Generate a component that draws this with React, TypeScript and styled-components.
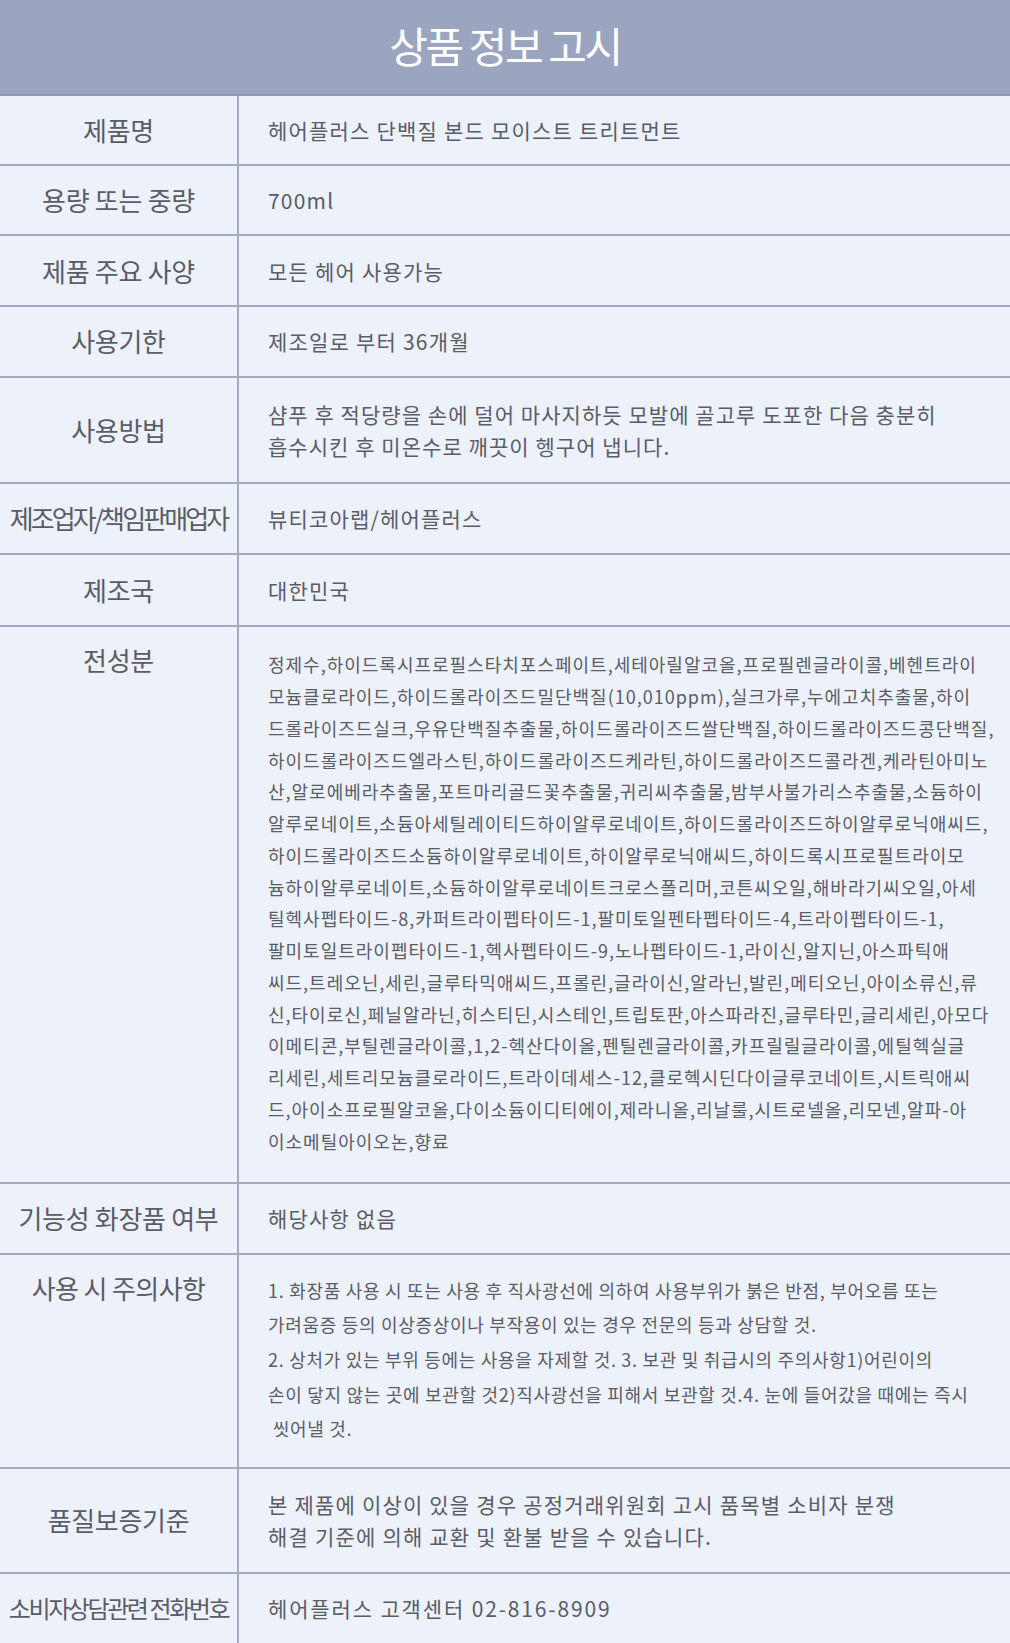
import styled, { createGlobalStyle } from "styled-components";

const GlobalStyle = createGlobalStyle`
  html, body {
    margin: 0;
    padding: 0;
    background: #edf1f9;
  }
  body {
    font-family: "Noto Sans CJK KR", "Noto Sans", sans-serif;
    color: #5a5c66;
    overflow-x: hidden;
  }
`;

type Info = {
  label: string;
  lines: string[];
  h: number;
  small?: boolean;
  top?: boolean;
  labelLs?: number;
  labelSize?: number;
  pad?: string;
  lh?: number;
  ls?: number;
};

const ingredients = [
  "정제수,하이드록시프로필스타치포스페이트,세테아릴알코올,프로필렌글라이콜,베헨트라이",
  "모늄클로라이드,하이드롤라이즈드밀단백질(10,010ppm),실크가루,누에고치추출물,하이",
  "드롤라이즈드실크,우유단백질추출물,하이드롤라이즈드쌀단백질,하이드롤라이즈드콩단백질,",
  "하이드롤라이즈드엘라스틴,하이드롤라이즈드케라틴,하이드롤라이즈드콜라겐,케라틴아미노",
  "산,알로에베라추출물,포트마리골드꽃추출물,귀리씨추출물,밤부사불가리스추출물,소듐하이",
  "알루로네이트,소듐아세틸레이티드하이알루로네이트,하이드롤라이즈드하이알루로닉애씨드,",
  "하이드롤라이즈드소듐하이알루로네이트,하이알루로닉애씨드,하이드록시프로필트라이모",
  "늄하이알루로네이트,소듐하이알루로네이트크로스폴리머,코튼씨오일,해바라기씨오일,아세",
  "틸헥사펩타이드-8,카퍼트라이펩타이드-1,팔미토일펜타펩타이드-4,트라이펩타이드-1,",
  "팔미토일트라이펩타이드-1,헥사펩타이드-9,노나펩타이드-1,라이신,알지닌,아스파틱애",
  "씨드,트레오닌,세린,글루타믹애씨드,프롤린,글라이신,알라닌,발린,메티오닌,아이소류신,류",
  "신,타이로신,페닐알라닌,히스티딘,시스테인,트립토판,아스파라진,글루타민,글리세린,아모다",
  "이메티콘,부틸렌글라이콜,1,2-헥산다이올,펜틸렌글라이콜,카프릴릴글라이콜,에틸헥실글",
  "리세린,세트리모늄클로라이드,트라이데세스-12,클로헥시딘다이글루코네이트,시트릭애씨",
  "드,아이소프로필알코올,다이소듐이디티에이,제라니올,리날룰,시트로넬올,리모넨,알파-아",
  "이소메틸아이오논,향료",
];

const cautions = [
  "1. 화장품 사용 시 또는 사용 후 직사광선에 의하여 사용부위가 붉은 반점, 부어오름 또는",
  "가려움증 등의 이상증상이나 부작용이 있는 경우 전문의 등과 상담할 것.",
  "2. 상처가 있는 부위 등에는 사용을 자제할 것. 3. 보관 및 취급시의 주의사항1)어린이의",
  "손이 닿지 않는 곳에 보관할 것2)직사광선을 피해서 보관할 것.4. 눈에 들어갔을 때에는 즉시",
  "\u00a0씻어낼 것.",
];

const rows: Info[] = [
  { label: "제품명", lines: ["헤어플러스 단백질 본드 모이스트 트리트먼트"], h: 70.3 },
  { label: "용량 또는 중량", lines: ["700ml"], h: 70.2 },
  { label: "제품 주요 사양", lines: ["모든 헤어 사용가능"], h: 70.2 },
  { label: "사용기한", lines: ["제조일로 부터 36개월"], h: 71.2 },
  {
    label: "사용방법",
    lines: [
      "샴푸 후 적당량을 손에 덜어 마사지하듯 모발에 골고루 도포한 다음 충분히",
      "흡수시킨 후 미온수로 깨끗이 헹구어 냅니다.",
    ],
    h: 105.8,
    ls: 1.05,
  },
  { label: "제조업자/책임판매업자", lines: ["뷰티코아랩/헤어플러스"], h: 71.3, labelLs: -2.9 },
  { label: "제조국", lines: ["대한민국"], h: 72.3 },
  {
    label: "전성분",
    lines: ingredients,
    h: 556.3,
    small: true,
    top: true,
    pad: "22px 0 24px",
    lh: 31.75,
    ls: 1,
  },
  { label: "기능성 화장품 여부", lines: ["해당사항 없음"], h: 71.3 },
  {
    label: "사용 시 주의사항",
    lines: cautions,
    h: 213.7,
    small: true,
    top: true,
    pad: "18px 0 21px",
    lh: 34.6,
    ls: 0.7,
    labelLs: -0.6,
  },
  {
    label: "품질보증기준",
    lines: [
      "본 제품에 이상이 있을 경우 공정거래위원회 고시 품목별 소비자 분쟁",
      "해결 기준에 의해 교환 및 환불 받을 수 있습니다.",
    ],
    h: 104.8,
  },
  {
    label: "소비자상담관련 전화번호",
    lines: ["헤어플러스 고객센터 02-816-8909"],
    h: 71.4,
    labelSize: 24,
    labelLs: -2.4,
    ls: 1.85,
  },
];

export default function App() {
  return (
    <>
      <GlobalStyle />
      <Sheet>
        <TitleBar>상품 정보 고시</TitleBar>
        {rows.map((row) => (
          <Row key={row.label} $h={row.h}>
            <Label $top={row.top} $ls={row.labelLs} $size={row.labelSize}>
              {row.label}
            </Label>
            <Value $small={row.small} $pad={row.pad} $lh={row.lh} $ls={row.ls}>
              {row.lines.map((line, i) => (
                <Line key={i}>{line}</Line>
              ))}
            </Value>
          </Row>
        ))}
      </Sheet>
    </>
  );
}

const Sheet = styled.div`
  width: 1010px;
  background: #edf1f9;
`;

const TitleBar = styled.div`
  height: 88px;
  padding-bottom: 6px;
  background: #9ba5bf;
  border-bottom: 2px solid #8f99b3;
  display: flex;
  align-items: center;
  justify-content: center;
  color: #ffffff;
  font-size: 42px;
  letter-spacing: -2.4px;
`;

const Row = styled.div<{ $h: number }>`
  display: grid;
  grid-template-columns: 239px 1fr;
  min-height: ${(p) => p.$h - 2}px;
  border-bottom: 2px solid #a3abc0;
`;

const Label = styled.div<{ $top?: boolean; $ls?: number; $size?: number }>`
  display: flex;
  justify-content: center;
  align-items: ${(p) => (p.$top ? "flex-start" : "center")};
  padding-top: ${(p) => (p.$top ? "17px" : "0")};
  border-right: 2px solid #a3abc0;
  font-size: ${(p) => p.$size ?? 26}px;
  line-height: 32px;
  letter-spacing: ${(p) => p.$ls ?? -0.3}px;
  white-space: nowrap;
  color: #5a5c66;
`;

const Value = styled.div<{ $small?: boolean; $pad?: string; $lh?: number; $ls?: number }>`
  display: flex;
  flex-direction: column;
  justify-content: center;
  padding: ${(p) => p.$pad ?? "0"};
  padding-left: 29px;
  font-size: ${(p) => (p.$small ? 18 : 21)}px;
  line-height: ${(p) => p.$lh ?? 32}px;
  letter-spacing: ${(p) => p.$ls ?? 1.2}px;
  color: #5a5c66;
`;

const Line = styled.div`
  white-space: nowrap;
`;
